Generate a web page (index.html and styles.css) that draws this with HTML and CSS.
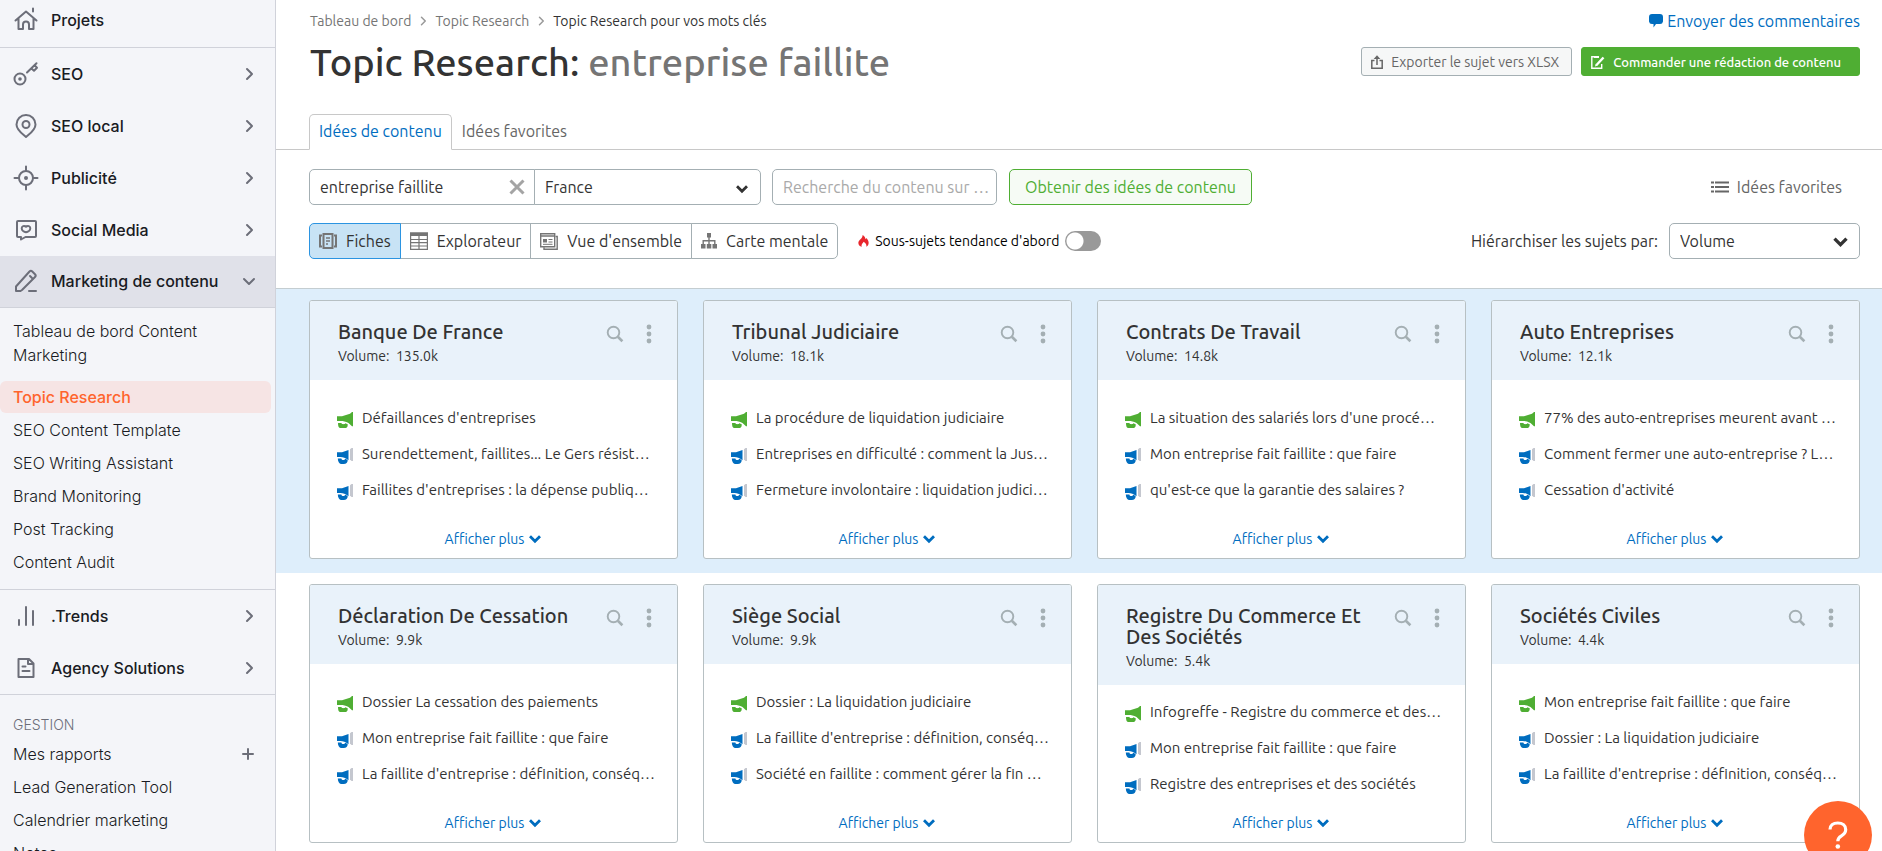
FILE: index.html
```html
<!DOCTYPE html>
<html lang="fr">
<head>
<meta charset="utf-8">
<meta name="viewport" content="width=device-width, initial-scale=1">
<title>Topic Research</title>
<link rel="stylesheet" href="styles.css">
</head>
<body>
<svg class="sprite" aria-hidden="true">
  <symbol id="chev" viewBox="0 0 16 16"><path d="M6 3l5 5-5 5" fill="none" stroke="currentColor" stroke-width="2" stroke-linecap="round" stroke-linejoin="round"/></symbol>
  <symbol id="down" viewBox="0 0 14 10"><path d="M2 2.2l5 5 5-5" fill="none" stroke="currentColor" stroke-width="2.8"/></symbol>
  <symbol id="lens" viewBox="0 0 18 18"><circle cx="7.5" cy="7.5" r="5.8" fill="none" stroke="currentColor" stroke-width="1.900"/><path d="M11.800 11.800l4.600 4.400" stroke="currentColor" stroke-width="2.600"/></symbol>
  <symbol id="dots" viewBox="0 0 6 20"><circle cx="3" cy="3" r="2.400" fill="currentColor"/><circle cx="3" cy="10" r="2.400" fill="currentColor"/><circle cx="3" cy="17" r="2.400" fill="currentColor"/></symbol>
  <symbol id="horn-g" viewBox="0 0 16 16"><path d="M0 4.200h5L13 1.800 15 0h1v14.300h-1L11.500 11c-3-1.500-5-2-8-2H0z" fill="#4fae33"/><path d="M1 11h3.400c.2.800.8 1.200 1.800 1.200S8 12 8.200 11.300l2.500.9c.2 2.500-.7 3.800-2.200 3.800H3.500C1.500 16 1 14 1 11z" fill="#4fae33"/></symbol>
  <symbol id="horn-b" viewBox="0 0 16 16"><path d="M0 4.200h5L11.500 2v10.200C8.500 9.800 6 9 3.500 9H0z" fill="#006dbf"/><path d="M.8 10.500h3.600c.2 1 .8 1.500 1.800 1.500s1.800-.4 2-1.200l2.500 1.200c0 2.500-1.500 4-4 4H4.500C2.500 16 .8 14 .8 10.500z" fill="#006dbf"/><path d="M13 1.300L14.500 0H16v13h-1.500L13 11.500z" fill="#c4c7cf"/></symbol>
</svg>
<div class="app">
  <aside class="side">
    <nav class="menu first">
      <a class="mi" href="#"><svg class="ic" viewBox="0 0 26 26"><path d="M2.500 13.500L13 4.500l10.500 9M5.500 11.500V22H10v-4.500a3 3 0 0 1 6 0V22h4.500V11.500M20 1.500v3" class="st"/></svg>Projets</a>
    </nav>
    <nav class="menu">
      <a class="mi" href="#"><svg class="ic" viewBox="0 0 26 26"><circle cx="7" cy="18" r="5.500" class="st"/><circle cx="7" cy="18" r="1.800" fill="currentColor"/><path d="M14 11.500l9.500-9.300M18.500 7.500l2.500 2.300 3-3-2.500-2.500" class="st"/></svg>SEO<svg class="ch"><use href="#chev"/></svg></a>
      <a class="mi" href="#"><svg class="ic" viewBox="0 0 26 26"><path d="M13 24c-4-3.500-9.500-7-9.500-12.500a9.500 9.500 0 0 1 19 0C22.500 17 17 20.500 13 24z" class="st"/><circle cx="13" cy="11.500" r="3.500" class="st"/></svg>SEO local<svg class="ch"><use href="#chev"/></svg></a>
      <a class="mi" href="#"><svg class="ic" viewBox="0 0 26 26"><circle cx="13" cy="13" r="7" class="st"/><circle cx="13" cy="13" r="2" fill="currentColor"/><path d="M13 1.500V6M13 20v4.500M1.500 13H6M20 13h4.500" class="st"/></svg>Publicité<svg class="ch"><use href="#chev"/></svg></a>
      <a class="mi" href="#"><svg class="ic" viewBox="0 0 26 26"><path d="M5 4h17a1 1 0 0 1 1 1v14a1 1 0 0 1-1 1H12.500L8 22.500V20H5a1 1 0 0 1-1-1V5a1 1 0 0 1 1-1z" class="st"/><path d="M13 9.800c-1.800-1.800-4.300-.6-4.300 1.500 0 2.200 2.400 3.700 4.300 4 1.900-.3 4.300-1.800 4.300-4 0-2.100-2.500-3.300-4.300-1.500z" class="st"/></svg>Social Media<svg class="ch"><use href="#chev"/></svg></a>
      <a class="mi on" href="#"><svg class="ic" viewBox="0 0 26 26"><path d="M3 23v-4.500L16.500 3.500a2 2 0 0 1 2.800 0l2.700 2.700a2 2 0 0 1 0 2.800L9 22l-1.500 1H3zM17 8l2 2M16 23h7" class="st"/></svg>Marketing de contenu<svg class="ch dn"><use href="#chev"/></svg></a>
    </nav>
    <nav class="sub">
      <a class="si two" href="#">Tableau de bord Content Marketing</a>
      <a class="si cur" href="#">Topic Research</a>
      <a class="si" href="#">SEO Content Template</a>
      <a class="si" href="#">SEO Writing Assistant</a>
      <a class="si" href="#">Brand Monitoring</a>
      <a class="si" href="#">Post Tracking</a>
      <a class="si" href="#">Content Audit</a>
    </nav>
    <nav class="menu">
      <a class="mi" href="#"><svg class="ic" viewBox="0 0 26 26"><path d="M6 17v5M13 4v18M20 8v14" class="st"/></svg>.Trends<svg class="ch"><use href="#chev"/></svg></a>
      <a class="mi" href="#"><svg class="ic" viewBox="0 0 26 26"><path d="M5.500 4H16l4.500 4.500V22h-15zM15 4v5h5M9.500 11.500h3M9.500 16h7" class="st"/></svg>Agency Solutions<svg class="ch"><use href="#chev"/></svg></a>
    </nav>
    <nav class="manage">
      <h2 class="mh">GESTION</h2>
      <a class="si plus" href="#">Mes rapports<svg class="add" viewBox="0 0 16 16"><path d="M8 3v10M3 8h10" class="st"/></svg></a>
      <a class="si" href="#">Lead Generation Tool</a>
      <a class="si" href="#">Calendrier marketing</a>
      <a class="si" href="#">Notes</a>
    </nav>
  </aside>
  <main class="main">
    <header class="top">
      <div class="bar">
        <nav class="crumbs">
          <a href="#">Tableau de bord</a><svg class="cs"><use href="#chev"/></svg><a href="#">Topic Research</a><svg class="cs"><use href="#chev"/></svg><span class="here">Topic Research pour vos mots clés</span>
        </nav>
        <a class="feedback" href="#"><svg width="14" height="14" viewBox="0 0 14 14"><path d="M3 0h8a3 3 0 0 1 3 3v4.500a3 3 0 0 1-3 2.500H7L4.500 13.500V10H3a3 3 0 0 1-3-2.500V3a3 3 0 0 1 3-3z" fill="currentColor"/></svg>Envoyer des commentaires</a>
      </div>
      <div class="bar head">
        <h1>Topic Research: <span>entreprise faillite</span></h1>
        <div class="acts">
          <button class="btn"><svg width="12" height="14" viewBox="0 0 12 14"><path d="M3.500 5.500H.8v7.700h10.400V5.500H8.500M6 10V2" fill="none" stroke="currentColor" stroke-width="1.500"/><path d="M2.700 4L6 .3 9.300 4z" fill="currentColor"/></svg>Exporter le sujet vers XLSX</button>
          <button class="btn go"><svg width="14" height="14" viewBox="0 0 14 14"><path d="M8 1.700H.8v11.500h9.900V9" fill="none" stroke="currentColor" stroke-width="1.400"/><path d="M3 1h5v2H3z" fill="currentColor"/><path d="M12.500 2.500l-7 7.500" stroke="currentColor" stroke-width="2.400"/><path d="M4 11.500l.7-2.700 2 1.700z" fill="currentColor"/></svg>Commander une rédaction de contenu</button>
        </div>
      </div>
      <nav class="tabs"><a class="tab on" href="#">Idées de contenu</a><a class="tab" href="#">Idées favorites</a></nav>
    </header>
    <section class="tools">
      <div class="row">
        <div class="pair">
          <div class="fld kw"><input type="text" aria-label="Mot clé" value="entreprise faillite"><button class="clear" aria-label="Effacer"><svg width="16" height="16" viewBox="0 0 16 16"><path d="M1.500 1.500l13 13M14.500 1.500l-13 13" stroke="currentColor" stroke-width="3"/></svg></button></div>
          <div class="fld geo"><select aria-label="Pays"><option>France</option></select><svg class="dd"><use href="#down"/></svg></div>
        </div>
        <div class="fld find"><input type="text" aria-label="Domaine" placeholder="Recherche du contenu sur …"></div>
        <button class="ideas">Obtenir des idées de contenu</button>
        <a class="favs" href="#"><svg width="18" height="12" viewBox="0 0 18 12"><path d="M0 1.500h3M0 6h3M0 10.500h3M4 1.500h14M4 6h14M4 10.500h14" stroke="currentColor" stroke-width="2"/></svg>Idées favorites</a>
      </div>
      <div class="row">
        <div class="views">
          <button class="on"><svg width="18" height="16" viewBox="0 0 18 16"><path d="M3 2.500H1v11h2M15 2.500h2v11h-2" fill="none" stroke="currentColor" stroke-width="2"/><path d="M4.500 1h9v14h-9z" fill="none" stroke="currentColor" stroke-width="2"/><path d="M7 5h4M7 8h4M7 11h2" stroke="currentColor" stroke-width="1.300"/></svg>Fiches</button>
          <button><svg width="18" height="18" viewBox="0 0 18 18"><path d="M.6 1h16.800v16.300H.6zM1 7.500h16M1 10.700h16M1 14h16M9 3v14" fill="none" stroke="currentColor" stroke-width="1.200"/><path d="M0 .5h18V4H0z" fill="currentColor"/></svg>Explorateur</button>
          <button><svg width="18" height="17" viewBox="0 0 18 17"><path d="M.7.700h14v13H.700z" fill="none" stroke="currentColor" stroke-width="1.400"/><path d="M1 3h14M15.500 3.500h1.700v12.700H4v-2" fill="none" stroke="currentColor" stroke-width="1.400"/><path d="M3 6h4v3.500H3z" fill="currentColor"/><path d="M8.500 6.500h4M8.500 9h4M3 11.300h9.500" stroke="currentColor"/></svg>Vue d'ensemble</button>
          <button><svg width="16" height="16" viewBox="0 0 16 16"><path d="M6 0h4v4.500H6zM0 11h4.500v4.500H0zM5.800 11h4.500v4.500H5.800zM11.500 11H16v4.500h-4.500z" fill="currentColor"/><path d="M8 4v7M2.200 11V7.700h11.600V11" fill="none" stroke="currentColor" stroke-width="1.400"/></svg>Carte mentale</button>
        </div>
        <label class="trend"><svg width="11" height="12" viewBox="0 0 12 14"><path d="M5 0c2.500 1.500 3.500 3.500 3.200 5 .6-.3.800-.8.900-1.500C11 5 12 7 12 9c0 2.200-1 3.800-2.600 4.600.4-2.600-1.200-4.200-3.200-5.600C5.500 9.800 3 10.800 4 13.600 1.500 13.200 0 11.500 0 9.200 0 5.800 5 4.500 5 0z" fill="#e8262d"/></svg>Sous-sujets tendance d'abord<input type="checkbox" role="switch" class="switch"></label>
        <div class="sort"><label for="sort">Hiérarchiser les sujets par:</label><div class="fld vol"><select id="sort"><option>Volume</option></select><svg class="dd big"><use href="#down"/></svg></div></div>
      </div>
    </section>
    <section class="band tint">
      <article class="card"><header><div><h3>Banque De France</h3><p>Volume:&nbsp; 135.0k</p></div><button aria-label="Rechercher"><svg width="18" height="18"><use href="#lens"/></svg></button><button aria-label="Options"><svg width="6" height="20"><use href="#dots"/></svg></button></header>
        <ul><li><svg><use href="#horn-g"/></svg>Défaillances d'entreprises</li><li><svg><use href="#horn-b"/></svg>Surendettement, faillites... Le Gers résist…</li><li><svg><use href="#horn-b"/></svg>Faillites d'entreprises : la dépense publiq…</li></ul>
        <a class="more" href="#">Afficher plus<svg><use href="#down"/></svg></a></article>
      <article class="card"><header><div><h3>Tribunal Judiciaire</h3><p>Volume:&nbsp; 18.1k</p></div><button aria-label="Rechercher"><svg width="18" height="18"><use href="#lens"/></svg></button><button aria-label="Options"><svg width="6" height="20"><use href="#dots"/></svg></button></header>
        <ul><li><svg><use href="#horn-g"/></svg>La procédure de liquidation judiciaire</li><li><svg><use href="#horn-b"/></svg>Entreprises en difficulté : comment la Jus…</li><li><svg><use href="#horn-b"/></svg>Fermeture involontaire : liquidation judici…</li></ul>
        <a class="more" href="#">Afficher plus<svg><use href="#down"/></svg></a></article>
      <article class="card"><header><div><h3>Contrats De Travail</h3><p>Volume:&nbsp; 14.8k</p></div><button aria-label="Rechercher"><svg width="18" height="18"><use href="#lens"/></svg></button><button aria-label="Options"><svg width="6" height="20"><use href="#dots"/></svg></button></header>
        <ul><li><svg><use href="#horn-g"/></svg>La situation des salariés lors d'une procé…</li><li><svg><use href="#horn-b"/></svg>Mon entreprise fait faillite : que faire</li><li><svg><use href="#horn-b"/></svg>qu'est-ce que la garantie des salaires ?</li></ul>
        <a class="more" href="#">Afficher plus<svg><use href="#down"/></svg></a></article>
      <article class="card"><header><div><h3>Auto Entreprises</h3><p>Volume:&nbsp; 12.1k</p></div><button aria-label="Rechercher"><svg width="18" height="18"><use href="#lens"/></svg></button><button aria-label="Options"><svg width="6" height="20"><use href="#dots"/></svg></button></header>
        <ul><li><svg><use href="#horn-g"/></svg>77% des auto-entreprises meurent avant …</li><li><svg><use href="#horn-b"/></svg>Comment fermer une auto-entreprise ? L…</li><li><svg><use href="#horn-b"/></svg>Cessation d'activité</li></ul>
        <a class="more" href="#">Afficher plus<svg><use href="#down"/></svg></a></article>
    </section>
    <section class="band">
      <article class="card"><header><div><h3>Déclaration De Cessation</h3><p>Volume:&nbsp; 9.9k</p></div><button aria-label="Rechercher"><svg width="18" height="18"><use href="#lens"/></svg></button><button aria-label="Options"><svg width="6" height="20"><use href="#dots"/></svg></button></header>
        <ul><li><svg><use href="#horn-g"/></svg>Dossier La cessation des paiements</li><li><svg><use href="#horn-b"/></svg>Mon entreprise fait faillite : que faire</li><li><svg><use href="#horn-b"/></svg>La faillite d'entreprise : définition, conséq…</li></ul>
        <a class="more" href="#">Afficher plus<svg><use href="#down"/></svg></a></article>
      <article class="card"><header><div><h3>Siège Social</h3><p>Volume:&nbsp; 9.9k</p></div><button aria-label="Rechercher"><svg width="18" height="18"><use href="#lens"/></svg></button><button aria-label="Options"><svg width="6" height="20"><use href="#dots"/></svg></button></header>
        <ul><li><svg><use href="#horn-g"/></svg>Dossier : La liquidation judiciaire</li><li><svg><use href="#horn-b"/></svg>La faillite d'entreprise : définition, conséq…</li><li><svg><use href="#horn-b"/></svg>Société en faillite : comment gérer la fin …</li></ul>
        <a class="more" href="#">Afficher plus<svg><use href="#down"/></svg></a></article>
      <article class="card"><header><div><h3>Registre Du Commerce Et Des Sociétés</h3><p>Volume:&nbsp; 5.4k</p></div><button aria-label="Rechercher"><svg width="18" height="18"><use href="#lens"/></svg></button><button aria-label="Options"><svg width="6" height="20"><use href="#dots"/></svg></button></header>
        <ul><li><svg><use href="#horn-g"/></svg>Infogreffe - Registre du commerce et des…</li><li><svg><use href="#horn-b"/></svg>Mon entreprise fait faillite : que faire</li><li><svg><use href="#horn-b"/></svg>Registre des entreprises et des sociétés</li></ul>
        <a class="more" href="#">Afficher plus<svg><use href="#down"/></svg></a></article>
      <article class="card"><header><div><h3>Sociétés Civiles</h3><p>Volume:&nbsp; 4.4k</p></div><button aria-label="Rechercher"><svg width="18" height="18"><use href="#lens"/></svg></button><button aria-label="Options"><svg width="6" height="20"><use href="#dots"/></svg></button></header>
        <ul><li><svg><use href="#horn-g"/></svg>Mon entreprise fait faillite : que faire</li><li><svg><use href="#horn-b"/></svg>Dossier : La liquidation judiciaire</li><li><svg><use href="#horn-b"/></svg>La faillite d'entreprise : définition, conséq…</li></ul>
        <a class="more" href="#">Afficher plus<svg><use href="#down"/></svg></a></article>
    </section>
  </main>
</div>
<button class="help" aria-label="Aide"><svg width="20" height="28" viewBox="0 0 20 28"><path d="M2 8.500C2 4.500 5 2 9.800 2c4.700 0 7.900 2.700 7.900 6.600 0 3-1.700 4.800-4.200 6.200-2.500 1.400-3.700 2.700-3.700 5.400" fill="none" stroke="currentColor" stroke-width="3.200"/><circle cx="9.800" cy="25.500" r="2.300" fill="currentColor"/></svg></button>
</body>
</html>
```
FILE: styles.css
```css
* { box-sizing: border-box; }
html, body { height: 100%; }
body { margin: 0; overflow: hidden; background: #fff; color: #333; font: 16px/20px "Ubuntu", "Noto Sans", sans-serif; }
a { color: inherit; text-decoration: none; }
h1, h2, h3, p, ul { margin: 0; padding: 0; }
ul { list-style: none; }
button, input, select { font: inherit; color: inherit; }
button { cursor: pointer; }
svg { flex: none; }
.sprite { position: absolute; width: 0; height: 0; }
.st { fill: none; stroke: currentColor; stroke-width: 2; stroke-linecap: round; stroke-linejoin: round; }

.app { display: flex; height: 100%; }

/* Sidebar */
.side { flex: none; width: 276px; overflow: hidden; background: #f4f5f9; border-right: 1px solid #d0d2da; color: #191b23; font: 16px/24px "Inter", sans-serif; }
.menu { border-bottom: 1px solid #d0d2da; }
.mi { display: flex; align-items: center; height: 52px; padding: 0 18px 0 13px; font-weight: 500; }
.first .mi { height: 47px; padding-bottom: 7px; }
.ic { width: 26px; height: 26px; margin-right: 12px; color: #6c6e79; }
.ch { width: 16px; height: 16px; margin-left: auto; color: #6c6e79; }
.dn { transform: rotate(90deg); }
.mi.on { height: 51px; padding-bottom: 2px; background: #e0e1e9; }
.sub { padding: 11px 4px 11px 0; border-bottom: 1px solid #d0d2da; }
.si { display: flex; align-items: center; height: 33px; padding: 0 13px; font-weight: 300; }
.si.two { height: 48px; margin-bottom: 14px; }
.si.cur { height: 32px; border-radius: 6px; background: #f6e4e4; color: #ff642d; font-weight: 500; }
.manage { padding-top: 19px; }
.mh { padding: 0 13px; margin-bottom: 1px; font-size: 14px; line-height: 22px; font-weight: 300; color: #6c6e79; }
.manage .plus { padding-right: 19px; }
.add { width: 16px; height: 16px; margin-left: auto; color: #6c6e79; }

/* Page header */
.main { flex: 1; min-width: 0; }
.top { padding-top: 11px; border-bottom: 1px solid #c8c8c8; }
.bar { display: flex; justify-content: space-between; padding: 0 22px 0 34px; }
.crumbs { display: flex; align-items: center; font-size: 14px; color: #757575; }
.crumbs .here { color: #333; }
.cs { width: 12px; height: 12px; margin: 0 6px; color: #999; }
.feedback { display: flex; align-items: center; gap: 4px; color: #006dbf; }
.head { height: 76px; align-items: flex-start; }
h1 { padding-top: 8px; font-size: 38px; line-height: 46px; font-weight: 500; }
h1 span { color: #757575; }
.acts { display: flex; gap: 9px; padding-top: 16px; }
.btn { display: flex; align-items: center; height: 29px; gap: 8px; padding: 0 12px 0 9px; border: 1px solid #a4afb3; border-radius: 3px; background: #f6f7f7; color: #666; font-size: 14px; white-space: nowrap; }
.go { padding-right: 18px; border-color: #4fae33; background: #4fae33; color: #fff; font-size: 13px; font-weight: 500; }
.tabs { display: flex; margin: 7px 33px -1px; }
.tab { padding: 5px 9px; height: 36px; line-height: 22px; color: #666; border: 1px solid transparent; }
.tab.on { background: #fff; color: #006dbf; border-color: #c8c8c8; border-bottom-color: #fff; border-radius: 5px 5px 0 0; }

/* Toolbar */
.tools { display: grid; gap: 18px; padding: 19px 22px 29px 33px; border-bottom: 1px solid #c4cdd1; }
.row { display: flex; align-items: center; height: 36px; }
.fld { position: relative; height: 36px; border: 1px solid #a4afb3; border-radius: 5px; background: #fff; overflow: hidden; }
.fld input, .fld select { width: 100%; height: 100%; padding: 0 10px; border: 0; background: none; appearance: none; outline: 0; }
.fld input::placeholder { color: #a9a9a9; opacity: 1; }
.pair { display: flex; margin-right: 11px; }
.kw { display: flex; align-items: center; width: 226px; border-radius: 5px 0 0 5px; }
.clear { display: grid; margin-right: 9px; padding: 0; border: 0; background: none; color: #a4a4a4; }
.geo { width: 227px; margin-left: -1px; border-radius: 0 5px 5px 0; }
.dd { position: absolute; right: 11px; top: 14px; width: 14px; height: 10px; pointer-events: none; }
.dd.big { right: 10px; top: 12px; width: 17px; height: 12px; }
.find { width: 225px; margin-right: 12px; }
.find input { padding-right: 0; }
.ideas { height: 36px; width: 243px; padding: 0; border: 1px solid #4fae33; border-radius: 5px; background: #f6fbf5; color: #4fae33; white-space: nowrap; }
.favs { display: flex; align-items: center; gap: 8px; margin-left: auto; padding-right: 18px; color: #666; }
.views { display: flex; }
.views button { display: flex; align-items: center; gap: 9px; height: 36px; padding: 0 9px; margin-left: -1px; border: 1px solid #a4afb3; background: #fff; white-space: nowrap; }
.views button svg { color: #757575; }
.views button:first-child { margin-left: 0; border-radius: 5px 0 0 5px; }
.views button:last-child { border-radius: 0 5px 5px 0; }
.views .on { position: relative; border-color: #2b94e1; background: #c8e3f5; }
.trend { display: flex; align-items: center; margin-left: 20px; font-size: 14px; color: #000; }
.trend svg { margin-right: 6px; }
.switch { appearance: none; width: 36px; height: 20px; margin: 0 0 0 6px; border-radius: 10px; background: radial-gradient(circle at 10px 10px, #fff 8px, #999 9px); }
.sort { display: flex; align-items: center; gap: 11px; margin-left: auto; }
.vol { width: 191px; }

/* Cards */
.band { display: grid; grid-template-columns: repeat(4, minmax(0, 1fr)); gap: 25px; padding: 11px 22px 14px 33px; }
.tint { background: #deeefb; }
.card { display: flex; flex-direction: column; min-height: 259px; border: 1px solid #b7c0c3; border-radius: 3px; background: #fff; overflow: hidden; }
.card header { display: flex; align-items: flex-start; padding: 20px 19px 14px 28px; background: #e9f2fa; }
.card header div { flex: 1; min-width: 0; }
h3 { font-size: 20px; line-height: 21px; font-weight: 500; }
.card p { margin-top: 4px; font-size: 14px; line-height: 20px; }
.card button { display: grid; place-items: center; width: 18px; height: 26px; padding: 0; border: 0; background: none; color: #a4afb3; }
.card button + button { margin-left: 16px; }
.card ul { flex: 1; display: flex; flex-direction: column; justify-content: center; padding: 0 0 0 27px; font-size: 15px; }
.card li { display: flex; align-items: center; gap: 9px; height: 36px; white-space: nowrap; }
.card li svg { width: 16px; height: 16px; margin-top: 4px; }
.more { display: flex; justify-content: center; align-items: center; gap: 4px; height: 31px; padding-bottom: 7px; font-size: 14px; color: #006dbf; }
.more svg { width: 14px; height: 10px; }

.help { position: fixed; right: 10px; bottom: -18px; display: grid; place-items: center; width: 68px; height: 68px; padding: 0; border: 0; border-radius: 50%; background: #ff642d; color: #fff; }
```
